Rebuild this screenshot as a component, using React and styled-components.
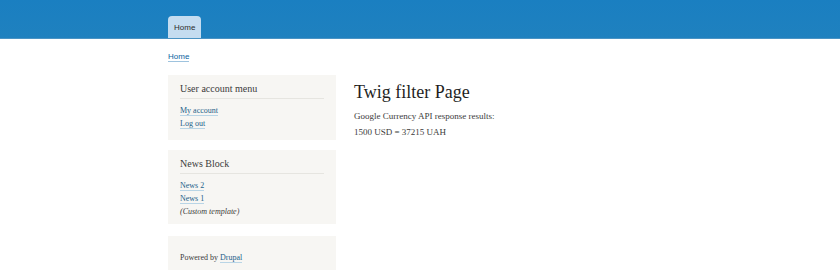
import React from "react";
import styled, { createGlobalStyle } from "styled-components";

const Global = createGlobalStyle`
  html, body { margin: 0; padding: 0; background: #ffffff; }
  body { font-family: "Liberation Serif", Georgia, serif; color: #3b3b3b; }
`;

const Header = styled.header`
  height: 39px;
  background: linear-gradient(to bottom, #1a7fc1, #1f81bf);
  border-bottom: 1px solid #4a93c4;
  display: flex;
  align-items: flex-end;
  padding-left: 168px;
  box-sizing: border-box;
`;

const Tab = styled.a`
  display: flex;
  align-items: center;
  height: 22px;
  padding: 0 6px;
  background: #c4dcf0;
  border-radius: 4px 4px 0 0;
  font-family: "Liberation Sans", Arial, sans-serif;
  font-size: 8px;
  color: #2c2c2c;
`;

const Page = styled.div`
  padding-left: 168px;
  width: 840px;
  box-sizing: border-box;
`;

const Breadcrumb = styled.div`
  padding-top: 13px;
  height: 23px;
  box-sizing: border-box;
  font-family: "Liberation Sans", Arial, sans-serif;
  font-size: 8px;
  a { color: #0c63a1; border-bottom: 1px solid #9ec3de; text-decoration: none; }
`;

const Columns = styled.div`
  display: flex;
  gap: 18px;
  margin-top: 13px;
`;

const Sidebar = styled.aside`
  width: 168px;
  display: flex;
  flex-direction: column;
  gap: 10px;
`;

const Block = styled.section`
  background: #f7f6f3;
  padding: ${(p) => p.$pad || "7px 12px 10px"};
  box-sizing: border-box;
  height: ${(p) => p.$h || "auto"};
  margin-top: ${(p) => p.$mt || "0"};
`;

const BlockTitle = styled.h2`
  margin: 0 0 7px;
  font-weight: normal;
  font-size: 10px;
  line-height: 13px;
  color: #3b3b3b;
  padding-bottom: 3px;
  border-bottom: 1px solid #e6e5e0;
`;

const LinkList = styled.div`
  display: flex;
  flex-direction: column;
  gap: 3px;
  font-size: 8px;
`;

const Link = styled.a`
  color: #1c5f8a;
  text-decoration: none;
  border-bottom: 1px solid #b9d5e6;
  align-self: flex-start;
  line-height: 9px;
`;

const Em = styled.em`
  font-size: 8px;
  line-height: 10px;
  color: #3b3b3b;
`;

const Powered = styled.div`
  font-size: 8px;
  color: #3b3b3b;
  padding-top: 7px;
`;

const Main = styled.main`
  padding-top: 6px;
`;

const H1 = styled.h1`
  margin: 0 0 8px;
  font-weight: normal;
  font-size: 18px;
  line-height: 22px;
  color: #1f1f1f;
`;

const P = styled.p`
  margin: 0 0 6px;
  font-size: 9px;
  line-height: 10px;
  color: #3b3b3b;
`;

export default function App() {
  return (
    <>
      <Global />
      <Header>
        <Tab>Home</Tab>
      </Header>
      <Page>
        <Breadcrumb>
          <a>Home</a>
        </Breadcrumb>
        <Columns>
          <Sidebar>
            <Block $h="65px">
              <BlockTitle>User account menu</BlockTitle>
              <LinkList>
                <Link>My account</Link>
                <Link>Log out</Link>
              </LinkList>
            </Block>
            <Block $h="74px">
              <BlockTitle>News Block</BlockTitle>
              <LinkList>
                <Link>News 2</Link>
                <Link>News 1</Link>
                <Em>(Custom template)</Em>
              </LinkList>
            </Block>
            <Block $h="34px" $pad="10px 12px" $mt="2px">
              <Powered>
                Powered by <Link>Drupal</Link>
              </Powered>
            </Block>
          </Sidebar>
          <Main>
            <H1>Twig filter Page</H1>
            <P>Google Currency API response results:</P>
            <P>1500 USD = 37215 UAH</P>
          </Main>
        </Columns>
      </Page>
    </>
  );
}
